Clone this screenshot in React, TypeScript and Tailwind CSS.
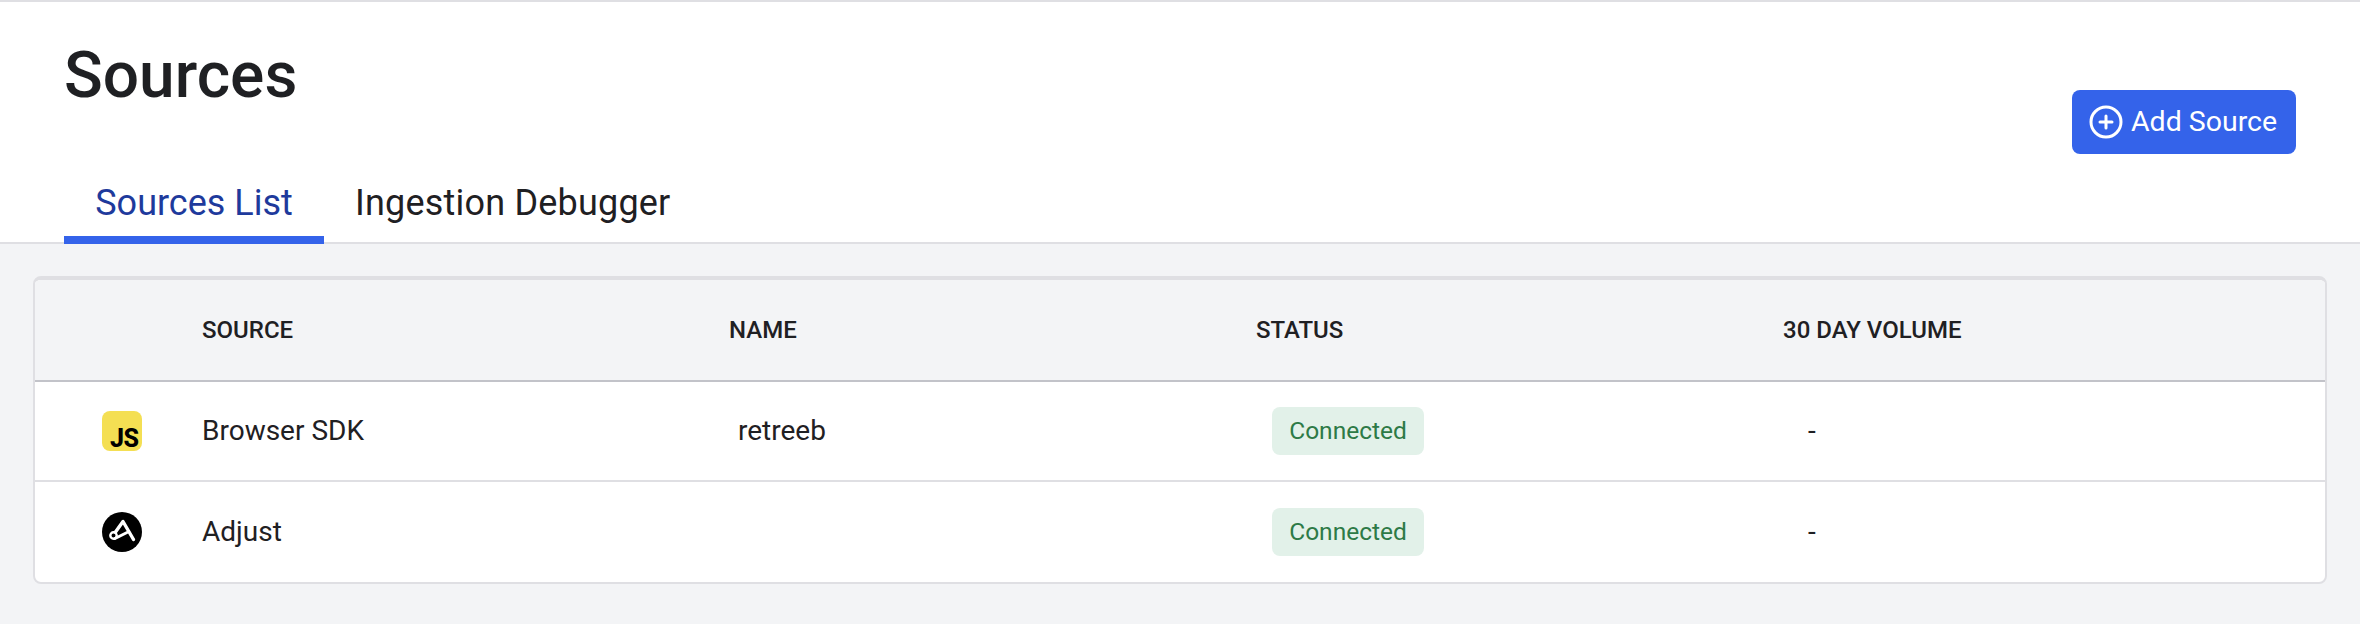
import { PlusCircle } from "lucide-react";

const JsLogo = () => (
    <div className="flex h-10 w-10 items-end justify-end rounded-lg bg-[#f4df53] pr-[3px]">
        <span className="text-[25px] leading-[24px] font-extrabold tracking-[-0.5px] text-black">JS</span>
    </div>
);

const AdjustLogo = () => (
    <svg width="40" height="40" viewBox="0 0 40 40" fill="none" stroke="#fff" strokeLinejoin="round" strokeLinecap="round">
        <circle cx="20" cy="20" r="20" fill="#000" stroke="none" />
        <path d="M31.5 27.5 L21 9.5 L13.5 20" strokeWidth="3.4" />
        <path d="M13 26.5 L25 20.5" strokeWidth="3" />
        <circle cx="11.5" cy="23.5" r="3.2" strokeWidth="2.4" />
    </svg>
);

const Row = ({ logo, source, name, last }: { logo: React.ReactNode; source: string; name: string; last?: boolean }) => (
    <div className={`grid h-[100px] grid-cols-[168px_527px_527px_526px_1fr] items-center ${last ? "" : "border-b-2 border-[#dfdfe3]"}`}>
        <div className="flex justify-center pl-[5px]">{logo}</div>
        <div className="-ml-px">{source}</div>
        <div className="pl-2">{name}</div>
        <div className="pl-[15px]">
            <span className="inline-flex h-12 w-[152px] items-center justify-center rounded-lg bg-[#e2f1e9] pt-px text-[24.5px] text-[#2d7a46]">
                Connected
            </span>
        </div>
        <div className="pl-[25px]">-</div>
    </div>
);

export default function App() {
    return (
        <div className="h-[624px] bg-[#f3f4f6] font-['Roboto','Liberation_Sans',sans-serif] text-[#1f2023]">
            <header className="h-[244px] border-t-2 border-b-2 border-[#dfdfe3] bg-white">
                <div className="flex h-[240px] justify-between pr-[64px] pl-[64px]">
                    <div className="flex flex-col">
                        <h1 className="mt-[39px] text-[64px] leading-[70px] font-medium">Sources</h1>
                        <nav className="mt-auto -mb-[2px] flex">
                            <div className="flex h-[62px] w-[260px] justify-center border-b-[8px] border-[#3463ea] text-[36px] leading-[42px] text-[#1e3a9c]">
                                Sources List
                            </div>
                            <div className="ml-[31px] h-[62px] text-[36px] leading-[42px] tracking-[0.2px]">Ingestion Debugger</div>
                        </nav>
                    </div>
                    <button className="mt-[88px] flex h-[64px] w-[224px] items-center gap-[7px] rounded-lg bg-[#3463ea] pl-4 text-[28.5px] text-white">
                        <PlusCircle size={36} strokeWidth={2} />
                        Add Source
                    </button>
                </div>
            </header>
            <main className="px-[33px] pt-[32px]">
                <div className="overflow-hidden rounded-lg border-2 border-t-4 border-[#dfdfe3] bg-white text-[28px]">
                    <div className="grid h-[102px] grid-cols-[168px_527px_527px_526px_1fr] items-center border-b-2 border-[#c2c3c9] bg-[#f3f4f6] text-[24px] font-medium">
                        <div />
                        <div className="-ml-px">SOURCE</div>
                        <div className="-ml-px">NAME</div>
                        <div className="-ml-px">STATUS</div>
                        <div>30 DAY VOLUME</div>
                    </div>
                    <Row logo={<JsLogo />} source="Browser SDK" name="retreeb" />
                    <Row logo={<AdjustLogo />} source="Adjust" name="" last />
                </div>
            </main>
        </div>
    );
}
